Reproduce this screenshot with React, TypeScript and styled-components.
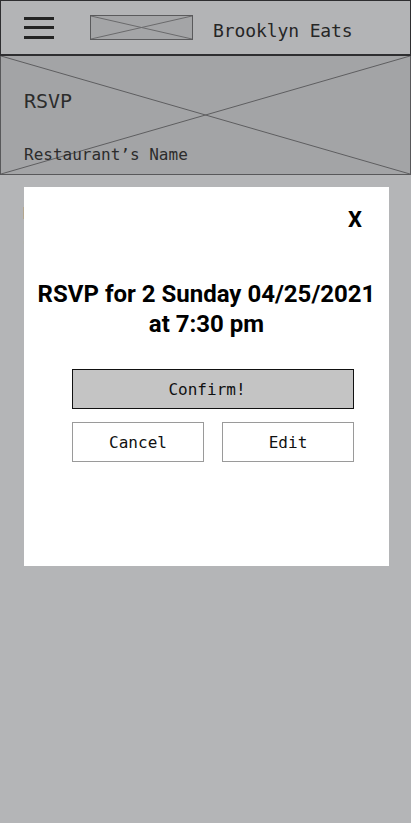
import React from "react";
import styled, { createGlobalStyle } from "styled-components";

const Global = createGlobalStyle`
  html, body { margin: 0; padding: 0; }
  body { background: #b4b5b7; }
  * { box-sizing: border-box; }
`;

const mono = `"DejaVu Sans Mono", "Liberation Mono", monospace`;
const sans = `Roboto, "Noto Sans", "Liberation Sans", sans-serif`;

const Page = styled.div`
  position: relative;
  width: 411px;
  min-height: 823px;
  background: #b4b5b7;
  overflow: hidden;
`;

const Header = styled.header`
  height: 56px;
  display: flex;
  align-items: center;
  padding-left: 23px;
  background: #b3b4b6;
  border: 1px solid #2e2e30;
  border-bottom-width: 2px;
`;

const Burger = styled.div`
  width: 30px;
  display: flex;
  flex-direction: column;
  gap: 6.5px;
  margin-right: 36px;
`;

const Bar = styled.span`
  display: block;
  height: 3px;
  background: #242424;
`;

const Placeholder = styled.div<{ $w?: string; $h?: string; $bg: string }>`
  position: relative;
  width: ${(p) => p.$w || "100%"};
  height: ${(p) => p.$h || "100%"};
  background: ${(p) => p.$bg};
  flex-shrink: 0;
`;

const Cross = styled.svg`
  position: absolute;
  inset: 0;
  width: 100%;
  height: 100%;
  display: block;
`;

const Logo = styled(Placeholder)`
  border: 1px solid #5a5a5c;
  margin-right: 20px;
`;

const Brand = styled.div`
  font-family: ${mono};
  font-size: 18px;
  color: #262626;
  margin-top: 6px;
  letter-spacing: -0.1px;
`;

const Hero = styled.section`
  position: relative;
  height: 119px;
  background: #a3a4a6;
  border: 1px solid #58585a;
  border-top: none;
  display: flex;
  flex-direction: column;
  padding: 33px 23px 0;
`;

const HeroContent = styled.div`
  position: relative;
  display: flex;
  flex-direction: column;
  gap: 32px;
`;

const HeroTitle = styled.div`
  font-family: ${mono};
  font-size: 20px;
  line-height: 24px;
  color: #2c2c2c;
`;

const HeroSub = styled.div`
  font-family: ${mono};
  font-size: 16px;
  line-height: 20px;
  color: #2c2c2c;
`;

const Body = styled.main`
  padding: 29px 23px;
  display: flex;
  flex-direction: column;
  gap: 8px;
  font-family: ${mono};
  font-size: 16px;
  line-height: 20px;
  color: #2a2a2a;
`;

const Modal = styled.div`
  position: absolute;
  top: 187px;
  left: 24px;
  width: 365px;
  height: 379px;
  background: #ffffff;
  display: flex;
  flex-direction: column;
  padding: 20px 0 0 0;
`;

const CloseRow = styled.div`
  display: flex;
  justify-content: flex-end;
  padding-right: 27px;
`;

const Close = styled.button`
  border: none;
  background: none;
  padding: 0;
  font-family: ${sans};
  font-weight: 700;
  font-size: 22px;
  line-height: 26px;
  color: #000;
  cursor: pointer;
`;

const Title = styled.h2`
  margin: 46px 0 0 0;
  font-family: ${sans};
  font-weight: 700;
  font-size: 24px;
  line-height: 30px;
  color: #000;
  text-align: center;
  white-space: nowrap;
`;

const Actions = styled.div`
  margin: 30px 0 0 48px;
  width: 282px;
  display: grid;
  grid-template-columns: 1fr 1fr;
  column-gap: 18px;
  row-gap: 13px;
`;

const Btn = styled.button<{ $primary?: boolean }>`
  height: 40px;
  grid-column: ${(p) => (p.$primary ? "1 / -1" : "auto")};
  background: ${(p) => (p.$primary ? "#c4c4c4" : "#ffffff")};
  border: 1px solid ${(p) => (p.$primary ? "#111" : "#9a9a9a")};
  font-family: ${mono};
  font-size: 16px;
  color: #111;
  padding: ${(p) => (p.$primary ? "0 12px 0 0" : "0")};
  cursor: pointer;
`;

const XLines = ({ color }: { color: string }) => (
  <Cross viewBox="0 0 100 100" preserveAspectRatio="none">
    <line x1="0" y1="0" x2="100" y2="100" stroke={color} strokeWidth="1" vectorEffect="non-scaling-stroke" />
    <line x1="0" y1="100" x2="100" y2="0" stroke={color} strokeWidth="1" vectorEffect="non-scaling-stroke" />
  </Cross>
);

export default function App() {
  return (
    <Page>
      <Global />
      <Header>
        <Burger aria-label="Menu">
          <Bar />
          <Bar />
          <Bar />
        </Burger>
        <Logo $w="103px" $h="25px" $bg="#a4a5a7">
          <XLines color="#6a6a6c" />
        </Logo>
        <Brand>Brooklyn Eats</Brand>
      </Header>
      <Hero>
        <XLines color="#5e5e60" />
        <HeroContent>
          <HeroTitle>RSVP</HeroTitle>
          <HeroSub>Restaurant’s Name</HeroSub>
        </HeroContent>
      </Hero>
      <Body>
        <div>Date &amp; Time</div>
        <div>choose a party size</div>
      </Body>
      <Modal role="dialog">
        <CloseRow>
          <Close>X</Close>
        </CloseRow>
        <Title>
          RSVP for 2 Sunday 04/25/2021
          <br />
          at 7:30 pm
        </Title>
        <Actions>
          <Btn $primary>Confirm!</Btn>
          <Btn>Cancel</Btn>
          <Btn>Edit</Btn>
        </Actions>
      </Modal>
    </Page>
  );
}
